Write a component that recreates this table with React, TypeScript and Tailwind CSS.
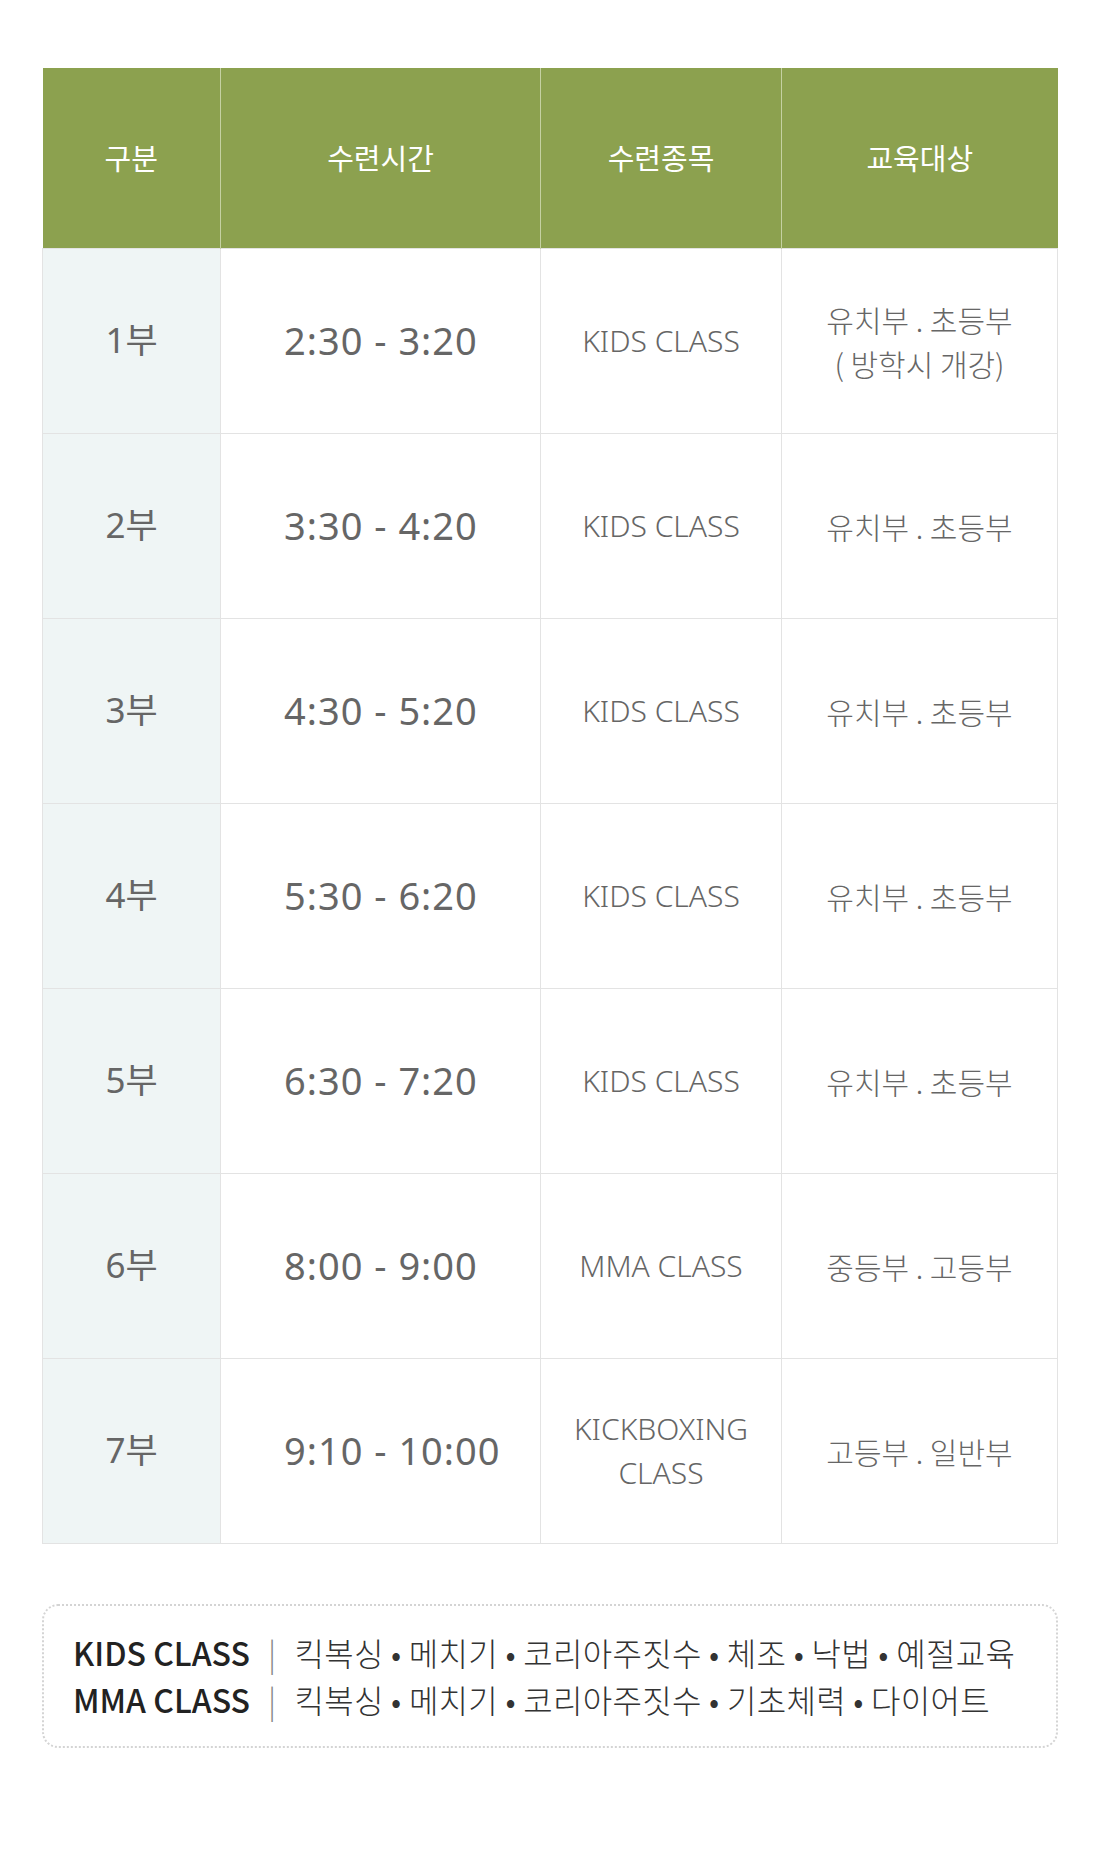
import React from "react";

type Row = {
  part: string;
  time: string;
  course: string[];
  target: string[];
};

const rows: Row[] = [
  { part: "1부", time: "2:30 - 3:20", course: ["KIDS CLASS"], target: ["유치부 . 초등부", "( 방학시 개강)"] },
  { part: "2부", time: "3:30 - 4:20", course: ["KIDS CLASS"], target: ["유치부 . 초등부"] },
  { part: "3부", time: "4:30 - 5:20", course: ["KIDS CLASS"], target: ["유치부 . 초등부"] },
  { part: "4부", time: "5:30 - 6:20", course: ["KIDS CLASS"], target: ["유치부 . 초등부"] },
  { part: "5부", time: "6:30 - 7:20", course: ["KIDS CLASS"], target: ["유치부 . 초등부"] },
  { part: "6부", time: "8:00 - 9:00", course: ["MMA CLASS"], target: ["중등부 . 고등부"] },
  { part: "7부", time: "9:10 - 10:00", course: ["KICKBOXING", "CLASS"], target: ["고등부 . 일반부"] },
];

const cjk = { fontFamily: '"Noto Sans CJK KR", "Noto Sans", sans-serif' };
const latin = { fontFamily: '"Noto Sans", "Noto Sans CJK KR", sans-serif' };

export default function App() {
  return (
    <div className="min-h-[1861px] bg-white px-[42px] pt-[68px]" style={cjk}>
      <table className="w-full table-fixed border-collapse text-center">
        <colgroup>
          <col className="w-[178px]" />
          <col className="w-[320px]" />
          <col className="w-[241px]" />
          <col />
        </colgroup>
        <thead>
          <tr className="h-[180px] bg-[#8ca14f] text-[29px] text-white">
            <th className="border-r border-[#c5d1a2] font-normal">구분</th>
            <th className="border-r border-[#c5d1a2] font-normal">수련시간</th>
            <th className="border-r border-[#c5d1a2] font-normal">수련종목</th>
            <th className="font-normal">교육대상</th>
          </tr>
        </thead>
        <tbody>
          {rows.map((r) => (
            <tr key={r.part} className="h-[185px]">
              <td className="border border-[#e3e3e3] bg-[#eff5f5] text-[35px] font-normal text-[#666]" style={latin}>
                {r.part}
              </td>
              <td
                className="border border-[#e3e3e3] pl-[63px] text-left text-[38px] font-normal tracking-[1px] text-[#666]"
                style={latin}
              >
                {r.time}
              </td>
              <td className="border border-[#e3e3e3] text-[30px] font-light leading-[44px] text-[#666]" style={latin}>
                {r.course.map((c) => (
                  <div key={c}>{c}</div>
                ))}
              </td>
              <td className="border border-[#e3e3e3] text-[30px] font-light leading-[44px] text-[#666]">
                {r.target.map((t) => (
                  <div key={t}>{t}</div>
                ))}
              </td>
            </tr>
          ))}
        </tbody>
      </table>

      <div className="mt-[60px] flex h-[144px] flex-col justify-center rounded-[16px] border-2 border-dotted border-[#d4d4d4] pl-[29px] text-[32px] leading-[47px]">
        <p className="font-light tracking-[0.3px] text-[#333]">
          <span className="font-medium tracking-normal text-[#222]">KIDS CLASS</span>
          <span className="mx-[18px] text-[#888]">|</span>
          킥복싱 • 메치기 • 코리아주짓수 • 체조 • 낙법 • 예절교육
        </p>
        <p className="font-light tracking-[0.3px] text-[#333]">
          <span className="font-medium tracking-normal text-[#222]">MMA CLASS</span>
          <span className="mx-[18px] text-[#888]">|</span>
          킥복싱 • 메치기 • 코리아주짓수 • 기초체력 • 다이어트
        </p>
      </div>
    </div>
  );
}
